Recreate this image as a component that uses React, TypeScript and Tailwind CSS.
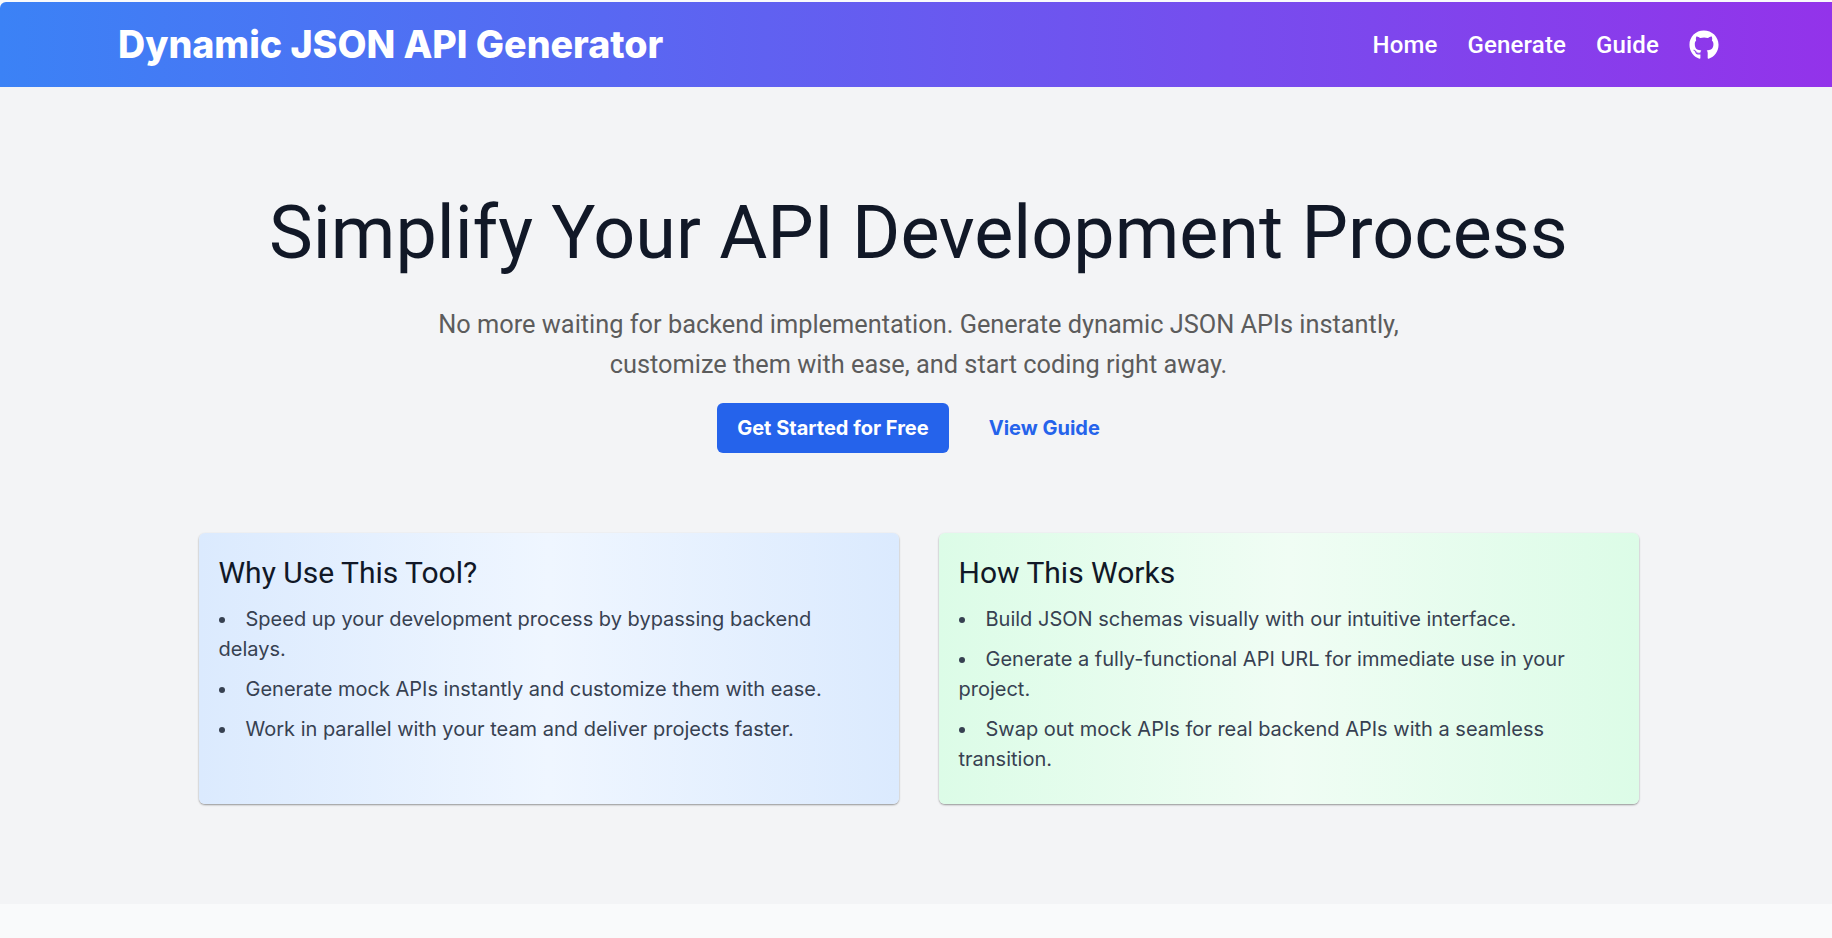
import { FaGithub } from 'react-icons/fa'

const whyItems = [
  'Speed up your development process by bypassing backend delays.',
  'Generate mock APIs instantly and customize them with ease.',
  'Work in parallel with your team and deliver projects faster.',
]

const howItems = [
  'Build JSON schemas visually with our intuitive interface.',
  'Generate a fully-functional API URL for immediate use in your project.',
  'Swap out mock APIs for real backend APIs with a seamless transition.',
]

const InfoCard = ({ title, items, className }: { title: string; items: string[]; className: string }) => (
  <div className={`h-[271px] w-[700px] rounded-md px-5 pt-[22px] shadow-[0_1px_2px_rgba(0,0,0,0.4)] ${className}`}>
    <h2 className="font-['Roboto',sans-serif] text-[30px] leading-9 text-[#111827]">{title}</h2>
    <ul className="mt-[13px] list-inside list-disc space-y-[10px] text-[20px] leading-[30px] text-[#374151]">
      {items.map((item) => (
        <li key={item}>{item}</li>
      ))}
    </ul>
  </div>
)

const App = () => {
  return (
    <div className="flex h-[938px] w-full flex-col overflow-hidden bg-[#f9fafb] font-['Inter',sans-serif]">
      <header className="mt-[2px] flex h-[85px] shrink-0 items-center justify-between rounded-tl-md bg-[linear-gradient(to_right,#3b82f6,#9333ea)] pl-[118px] pr-[113px] text-white">
        <h1 className="text-[37.6px] font-extrabold leading-10">Dynamic JSON API Generator</h1>
        <nav className="flex items-center gap-[30px] font-['Roboto',sans-serif] text-[24px] font-medium leading-8 tracking-[0.15px]">
          <a>Home</a>
          <a>Generate</a>
          <a>Guide</a>
          <FaGithub className="h-[30px] w-[30px]" />
        </nav>
      </header>

      <main className="flex h-[817px] shrink-0 flex-col items-center bg-[#f3f4f6] pl-[5px]">
        <h2 className="mt-[106px] font-['Roboto',sans-serif] text-[73.7px] leading-[80px] text-[#111827]">
          Simplify Your API Development Process
        </h2>
        <p className="mt-[31px] text-center font-['Roboto',sans-serif] text-[25.35px] leading-[40px] text-[#5c5c5c]">
          No more waiting for backend implementation. Generate dynamic JSON APIs instantly,
          <br />
          customize them with ease, and start coding right away.
        </p>
        <div className="mt-[19px] flex items-center gap-[20px]">
          <a className="rounded-md bg-[#2563eb] px-5 py-[10px] text-[20px] font-bold leading-[30px] text-white">
            Get Started for Free
          </a>
          <a className="px-5 py-[10px] text-[20px] font-bold leading-[30px] text-[#2563eb]">View Guide</a>
        </div>
        <div className="mt-[80px] flex gap-[40px]">
          <InfoCard title="Why Use This Tool?" items={whyItems} className="bg-[linear-gradient(to_right,#dbeafe,#eff6ff,#dbeafe)]" />
          <InfoCard title="How This Works" items={howItems} className="bg-[linear-gradient(to_right,#dcfce7,#f0fdf4,#dcfce7)]" />
        </div>
      </main>
    </div>
  )
}

export default App
